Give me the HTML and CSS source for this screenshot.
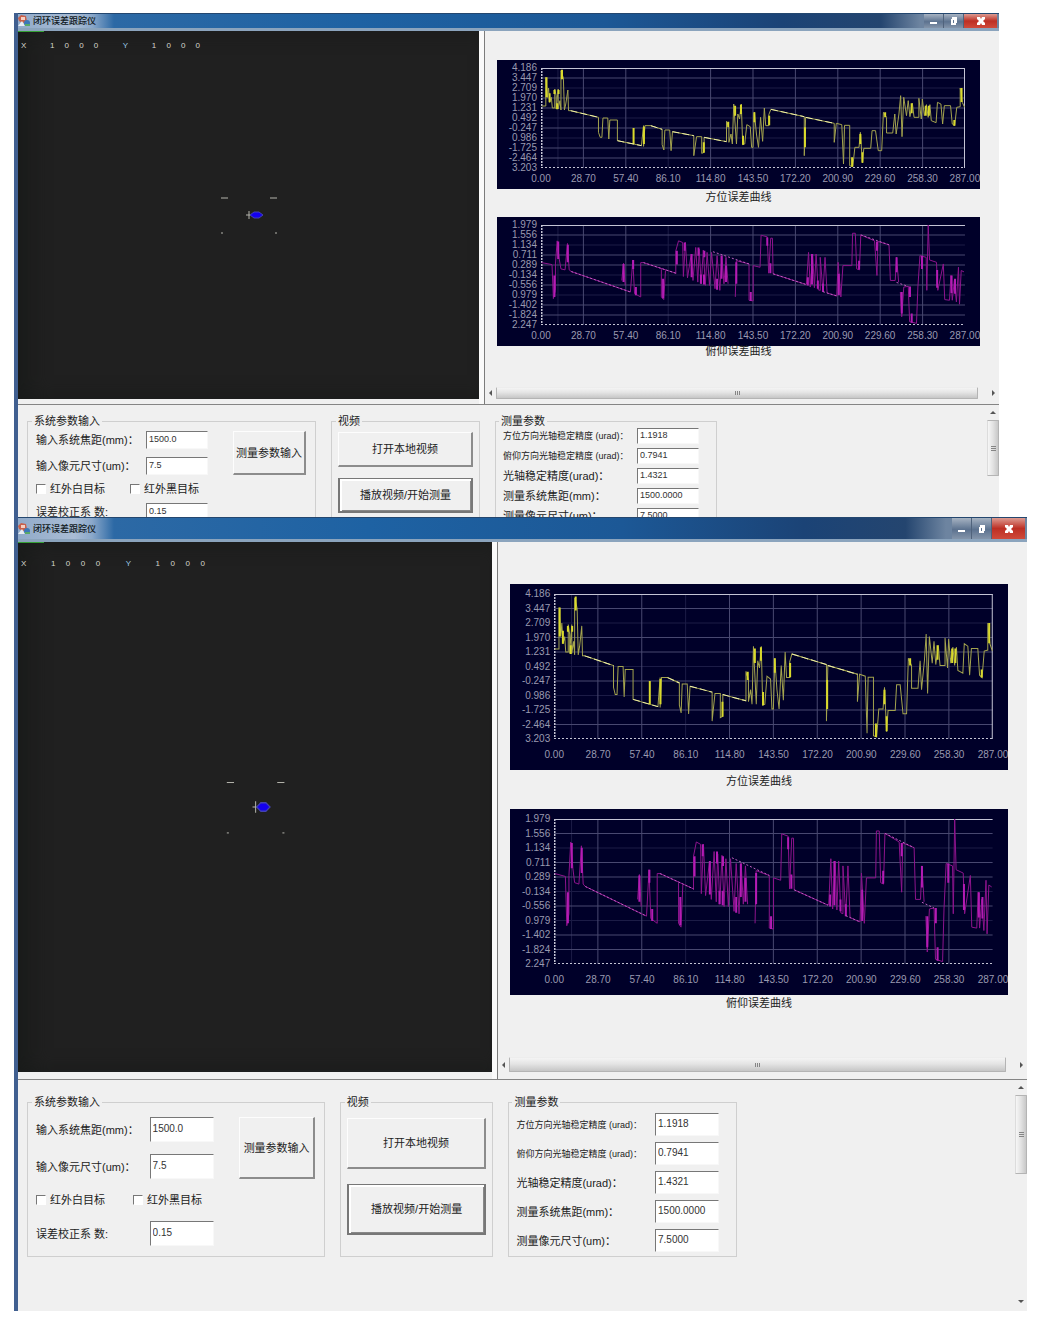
FILE: index.html
```
<!DOCTYPE html>
<html lang="zh-CN">
<head>
<meta charset="utf-8">
<title>闭环误差跟踪仪</title>
<link rel="stylesheet" href="styles.css">
</head>
<body>
<svg class="defs" aria-hidden="true">
  <symbol id="app-icon" viewBox="0 0 12 12">
    <path d="M0 3 3 0 8 1 9 6 5 8 1 6z" fill="#c9604a"/>
    <path d="M3 2h4v3H3z" fill="#f3cfc4"/>
    <path d="M0 11 4 6l3 5z" fill="#e8ecf2"/>
    <circle cx="9" cy="8" r="3" fill="#3c78b8"/>
    <path d="M7 9h5v2H7z" fill="#58a868"/>
  </symbol>
  <symbol id="reticle" viewBox="0 0 461 368" preserveAspectRatio="none">
    <path class="mark" d="M203 167h7M252 167h7M203 202h2M257 202h2"/>
    <path class="mark" d="M231 180v8M228 184h4"/>
    <path d="M232 184 236 181H241L245 184 241 187H236z" fill="#1400f0" stroke="#4444b0" stroke-width="1"/>
  </symbol>
  <symbol id="grid-lines" viewBox="0 0 100 100" preserveAspectRatio="none">
    <path class="grid-line grid-line--faint" d="M0 20H100M0 50H100M0 70H100M4 0V100M30 0V100"/>
    <path class="grid-line" d="M0 10H100M0 30H100M0 40H100M0 60H100M0 80H100M0 90H100"/>
    <path class="grid-line" d="M10 0V100M20 0V100M40 0V100M50 0V100M60 0V100M70 0V100M80 0V100M90 0V100"/>
    <path class="frame-line" d="M0 0H100"/>
    <path class="frame-line frame-line--ticks" d="M0 100H100"/>
    <path class="frame-line frame-line--axis" d="M0 0V100"/>
  </symbol>
  <symbol id="azimuth-curve" viewBox="178 202 1232 300" preserveAspectRatio="none">
    <path class="frame-line" d="M1410 202V502"/>
    <path class="curve curve--azimuth" d="M180 316H192V230L197 290 200 262 203 305 208 290 211 322H218V265L222 285V325L228 265V325L233 300 236 328V210L243 232 246 328 250 310 256 268 258 330H264L345 350V395L350 410H355L358 352H372L375 415 378 358H400V420L470 435V433L476 375V437L480 375H497L530 386V432L535 448 538 388H552L556 450 560 393 622 405V465L630 408H645V458L652 455V410L717 423V362L724 380V425L730 400 734 430 738 310 746 430 750 340 755 355 760 310 764 432 770 430 776 372 786 378 790 440H794L798 335 804 400 810 440 816 350 822 422 827 322 831 375H840V342L846 326 943 348V465L947 350 1030 368V425L1036 368 1052 372 1057 490 1060 374H1075V495L1084 498 1090 440H1102L1106 395 1112 487 1116 443H1136L1140 390H1150L1158 450H1168L1173 335 1182 350V397H1200L1206 340 1210 400 1218 340 1223 285 1227 408 1232 290 1240 345 1245 300 1250 348 1257 308 1262 350H1276V293L1283 355 1286 295 1292 345 1298 312 1303 350 1308 312 1312 360 1326 366 1330 305 1340 310 1345 370 1350 315H1368L1373 370 1380 375 1386 320 1396 318V262L1402 305 1409 320"/>
    <path class="curve curve--azimuth curve--dense" d="M194 230V290M203 278V305M217 268V280M229 268V280M225 308V326M239 207V236M447 382V430M477 378V430M651 425V456M722 363V380M742 315V345M759 312V340M765 405V432M798 335V365M841 345V374M945 380V440M1082 470V498M1106 400V430M1112 455V486M1178 335V350M1255 308V338M1296 315V345M1305 315V345M1379 358V375M1400 262V304"/>
    <path class="trend" d="M264 330 345 350M400 420 470 435M497 375 530 386M560 393 622 405M652 410 717 423M846 326 943 348M947 350 1030 368"/>
  </symbol>
  <symbol id="elevation-curve" viewBox="180 72 1233 303" preserveAspectRatio="none">
    <path class="curve curve--elevation" d="M182 186 212 192 216 295 222 270V190L227 120 233 175 238 205 250 208 257 128 262 208 268 213 440 275M415 240 420 188 425 255M440 275 447 178 452 280 470 290V186L478 186 572 218M530 206V290L537 298 542 210M572 220V150L580 120 592 125 594 228 600 125 606 232 617 160 622 240 630 140 636 245 640 145 646 250 652 148 658 255 663 155 670 255 676 155 686 265 692 165 700 270 706 165 712 250 718 170 724 250M745 290 748 180 785 190V300L797 302V195L817 200 820 103 838 108 842 218 848 112H853L855 220 950 252M952 252 958 155 963 260 970 160 975 262 980 160 986 268 992 270V170L1000 275 1006 170 1012 278 1040 287 1044 185 1052 290 1058 195 1084 195 1086 97 1094 97 1098 205 1106 208 1110 102 1150 120 1157 225 1160 122 1192 132 1196 240H1210L1214 170 1220 245M1225 275 1229 350 1235 260 1248 258 1252 365 1272 370 1276 260 1282 165 1300 170 1302 270 1306 72 1310 178 1330 185 1334 270 1350 190 1354 298 1368 300 1372 225 1376 300 1382 240 1388 305 1394 200 1397 312 1402 210 1410 214"/>
    <path class="curve curve--elevation curve--dense" d="M230 122V175M258 132V185M219 225V290M420 190V245M448 178V205M456 260V285M535 235V294M575 150V192M598 125V150M618 160V230M638 140V165M645 222V250M655 150V170M654 222V252M692 235V268M705 165V235M718 195V245M748 185V250M790 275V302M838 110V135M847 188V218M956 230V255M968 160V252M985 240V265M1000 250V275M1046 220V285M1105 180V207M1157 122V150M1214 170V215M1229 275V340M1253 258V290M1258 340V368M1288 165V205M1332 208V262M1374 225V278M1384 235V280"/>
    <path class="trend trend--soft" d="M268 213 440 275M478 186 572 218M855 220 950 252M1110 102 1192 132M680 153 785 190M1000 274 1040 287M1214 246 1248 258"/>
  </symbol>
</svg>

<main class="desktop">

<section class="window window--short">
  <header class="titlebar">
    <svg class="titlebar__icon"><use href="#app-icon"/></svg>
    <h1 class="titlebar__text">闭环误差跟踪仪</h1>
    <div class="titlebar__controls">
      <button class="sys" type="button" aria-label="最小化"><svg viewBox="0 0 12 10"><path d="M2 6h7v2H2z"/></svg></button>
      <button class="sys" type="button" aria-label="还原"><svg viewBox="0 0 12 10"><path fill-rule="evenodd" d="M4 1h5v6H8v2H3V3h1zM5 4v3h1V4z"/></svg></button>
      <button class="sys sys--close" type="button" aria-label="关闭"><svg viewBox="0 0 12 10"><path d="M2 1h3l1 2 1-2h3v2L8 5l2 2v2H7L6 7 5 9H2V7l2-2-2-2z"/></svg></button>
    </div>
  </header>
  <div class="upper">
    <div class="video">
      <p class="readout"><span>X</span><span></span><span>1</span><span>0</span><span>0</span><span>0</span><span></span><span class="readout__y">Y</span><span></span><span>1</span><span>0</span><span>0</span><span>0</span></p>
      <svg class="video__overlay"><use href="#reticle" width="100%" height="100%"/></svg>
    </div>
    <div class="splitter"></div>
    <div class="charts">
      <figure class="figure">
        <div class="chart">
          <ol class="axis axis--y"><li>4.186</li><li>3.447</li><li>2.709</li><li>1.970</li><li>1.231</li><li>0.492</li><li>-0.247</li><li>0.986</li><li>-1.725</li><li>-2.464</li><li>3.203</li></ol>
          <svg class="plot"><use href="#grid-lines" width="100%" height="100%"/><use href="#azimuth-curve" width="100%" height="100%"/></svg>
          <ol class="axis axis--x"><li>0.00</li><li>28.70</li><li>57.40</li><li>86.10</li><li>114.80</li><li>143.50</li><li>172.20</li><li>200.90</li><li>229.60</li><li>258.30</li><li>287.00</li></ol>
        </div>
        <figcaption class="caption">方位误差曲线</figcaption>
      </figure>
      <figure class="figure figure--last">
        <div class="chart">
          <ol class="axis axis--y"><li>1.979</li><li>1.556</li><li>1.134</li><li>0.711</li><li>0.289</li><li>-0.134</li><li>-0.556</li><li>0.979</li><li>-1.402</li><li>-1.824</li><li>2.247</li></ol>
          <svg class="plot"><use href="#grid-lines" width="100%" height="100%"/><use href="#elevation-curve" width="100%" height="100%"/></svg>
          <ol class="axis axis--x"><li>0.00</li><li>28.70</li><li>57.40</li><li>86.10</li><li>114.80</li><li>143.50</li><li>172.20</li><li>200.90</li><li>229.60</li><li>258.30</li><li>287.00</li></ol>
        </div>
        <figcaption class="caption">俯仰误差曲线</figcaption>
      </figure>
      <div class="hscroll"><i class="arrow arrow--left"></i><div class="hscroll__thumb"><i class="grip"></i></div><i class="arrow arrow--right"></i></div>
    </div>
  </div>
  <div class="lower">
    <form class="groups">
      <fieldset class="group">
        <legend>系统参数输入</legend>
        <div class="inputs">
          <label for="a-focal">输入系统焦距(mm)：</label><input id="a-focal" type="text" value="1500.0">
          <label for="a-pixel">输入像元尺寸(um)：</label><input id="a-pixel" type="text" value="7.5">
          <div class="checks">
            <label class="check"><input type="checkbox">红外白目标</label>
            <label class="check"><input type="checkbox">红外黑目标</label>
          </div>
          <label for="a-factor">误差校正系 数:</label><input id="a-factor" type="text" value="0.15">
          <button class="btn inputs__submit" type="button">测量参数输入</button>
        </div>
      </fieldset>
      <fieldset class="group">
        <legend>视频</legend>
        <div class="actions">
          <button class="btn" type="button">打开本地视频</button>
          <button class="btn btn--default" type="button">播放视频/开始测量</button>
        </div>
      </fieldset>
      <fieldset class="group group--results">
        <legend>测量参数</legend>
        <div class="results">
          <label class="dense" for="a-az">方位方向光轴稳定精度 (urad)：</label><input id="a-az" type="text" value="1.1918">
          <label class="dense" for="a-el">俯仰方向光轴稳定精度 (urad)：</label><input id="a-el" type="text" value="0.7941">
          <label for="a-ax">光轴稳定精度(urad)：</label><input id="a-ax" type="text" value="1.4321">
          <label for="a-mf">测量系统焦距(mm)：</label><input id="a-mf" type="text" value="1500.0000">
          <label for="a-mp">测量像元尺寸(um)：</label><input id="a-mp" type="text" value="7.5000">
        </div>
      </fieldset>
    </form>
    <div class="vscroll"><i class="arrow arrow--up"></i><div class="vscroll__thumb"><i class="grip grip--v"></i></div><i class="arrow arrow--down"></i></div>
  </div>
</section>

<section class="window window--tall">
  <header class="titlebar">
    <svg class="titlebar__icon"><use href="#app-icon"/></svg>
    <h1 class="titlebar__text">闭环误差跟踪仪</h1>
    <div class="titlebar__controls">
      <button class="sys" type="button" aria-label="最小化"><svg viewBox="0 0 12 10"><path d="M2 6h7v2H2z"/></svg></button>
      <button class="sys" type="button" aria-label="还原"><svg viewBox="0 0 12 10"><path fill-rule="evenodd" d="M4 1h5v6H8v2H3V3h1zM5 4v3h1V4z"/></svg></button>
      <button class="sys sys--close" type="button" aria-label="关闭"><svg viewBox="0 0 12 10"><path d="M2 1h3l1 2 1-2h3v2L8 5l2 2v2H7L6 7 5 9H2V7l2-2-2-2z"/></svg></button>
    </div>
  </header>
  <div class="upper">
    <div class="video">
      <p class="readout"><span>X</span><span></span><span>1</span><span>0</span><span>0</span><span>0</span><span></span><span class="readout__y">Y</span><span></span><span>1</span><span>0</span><span>0</span><span>0</span></p>
      <svg class="video__overlay"><use href="#reticle" width="100%" height="100%"/></svg>
    </div>
    <div class="splitter"></div>
    <div class="charts">
      <figure class="figure">
        <div class="chart">
          <ol class="axis axis--y"><li>4.186</li><li>3.447</li><li>2.709</li><li>1.970</li><li>1.231</li><li>0.492</li><li>-0.247</li><li>0.986</li><li>-1.725</li><li>-2.464</li><li>3.203</li></ol>
          <svg class="plot"><use href="#grid-lines" width="100%" height="100%"/><use href="#azimuth-curve" width="100%" height="100%"/></svg>
          <ol class="axis axis--x"><li>0.00</li><li>28.70</li><li>57.40</li><li>86.10</li><li>114.80</li><li>143.50</li><li>172.20</li><li>200.90</li><li>229.60</li><li>258.30</li><li>287.00</li></ol>
        </div>
        <figcaption class="caption">方位误差曲线</figcaption>
      </figure>
      <figure class="figure figure--last">
        <div class="chart">
          <ol class="axis axis--y"><li>1.979</li><li>1.556</li><li>1.134</li><li>0.711</li><li>0.289</li><li>-0.134</li><li>-0.556</li><li>0.979</li><li>-1.402</li><li>-1.824</li><li>2.247</li></ol>
          <svg class="plot"><use href="#grid-lines" width="100%" height="100%"/><use href="#elevation-curve" width="100%" height="100%"/></svg>
          <ol class="axis axis--x"><li>0.00</li><li>28.70</li><li>57.40</li><li>86.10</li><li>114.80</li><li>143.50</li><li>172.20</li><li>200.90</li><li>229.60</li><li>258.30</li><li>287.00</li></ol>
        </div>
        <figcaption class="caption">俯仰误差曲线</figcaption>
      </figure>
      <div class="hscroll"><i class="arrow arrow--left"></i><div class="hscroll__thumb"><i class="grip"></i></div><i class="arrow arrow--right"></i></div>
    </div>
  </div>
  <div class="lower">
    <form class="groups">
      <fieldset class="group">
        <legend>系统参数输入</legend>
        <div class="inputs">
          <label for="b-focal">输入系统焦距(mm)：</label><input id="b-focal" type="text" value="1500.0">
          <label for="b-pixel">输入像元尺寸(um)：</label><input id="b-pixel" type="text" value="7.5">
          <div class="checks">
            <label class="check"><input type="checkbox">红外白目标</label>
            <label class="check"><input type="checkbox">红外黑目标</label>
          </div>
          <label for="b-factor">误差校正系 数:</label><input id="b-factor" type="text" value="0.15">
          <button class="btn inputs__submit" type="button">测量参数输入</button>
        </div>
      </fieldset>
      <fieldset class="group">
        <legend>视频</legend>
        <div class="actions">
          <button class="btn" type="button">打开本地视频</button>
          <button class="btn btn--default" type="button">播放视频/开始测量</button>
        </div>
      </fieldset>
      <fieldset class="group group--results">
        <legend>测量参数</legend>
        <div class="results">
          <label class="dense" for="b-az">方位方向光轴稳定精度 (urad)：</label><input id="b-az" type="text" value="1.1918">
          <label class="dense" for="b-el">俯仰方向光轴稳定精度 (urad)：</label><input id="b-el" type="text" value="0.7941">
          <label for="b-ax">光轴稳定精度(urad)：</label><input id="b-ax" type="text" value="1.4321">
          <label for="b-mf">测量系统焦距(mm)：</label><input id="b-mf" type="text" value="1500.0000">
          <label for="b-mp">测量像元尺寸(um)：</label><input id="b-mp" type="text" value="7.5000">
        </div>
      </fieldset>
    </form>
    <div class="vscroll"><i class="arrow arrow--up"></i><div class="vscroll__thumb"><i class="grip grip--v"></i></div><i class="arrow arrow--down"></i></div>
  </div>
</section>

</main>
</body>
</html>
```
FILE: styles.css
```
* { box-sizing: border-box; }

body {
  margin: 0;
  background: #fff;
  color: #222;
  font: 11px/12px "Liberation Sans", "Noto Sans CJK SC", sans-serif;
}

.defs { display: none; }

.desktop { padding: 13px 17px 13px 14px; }

/* The two windows share one layout and differ in their vertical rhythm. */
.window {
  border-left: 4px solid #405f90;
  background: #f0f0f0;
  overflow: hidden;
}

.window--short {
  --title-h: 18px;
  --video-h: 368px;
  --video-gap: 5px;
  --readout-top: 9px;
  --chart-top: 29px;
  --chart-h: 129px;
  --plot-top: 8px;
  --plot-bottom: 21px;
  --caption-h: 28px;
  --caption-line: 16px;
  --caption-last: 11px;
  --hscroll-h: 12px;
  --legend-line: 12px;
  --panel-top: 10px;
  --field-h: 18px;
  --field-gap: 8px;
  --check-h: 12px;
  --inputs-top: 4px;
  --btn-h: 35px;
  --btn-gap: 11px;
  --result-h: 16px;
  --result-gap: 4px;
  --result-top: 1px;
  --thumb-h: 56px;
  --value-size: 9px;
  max-height: 504px;
  margin-right: 28px;
}

.window--tall {
  --title-h: 25px;
  --video-h: 530px;
  --video-gap: 7px;
  --readout-top: 16px;
  --chart-top: 42px;
  --chart-h: 186px;
  --plot-top: 10px;
  --plot-bottom: 31px;
  --caption-h: 39px;
  --caption-line: 22px;
  --caption-last: 16px;
  --hscroll-h: 15px;
  --legend-line: 14px;
  --panel-top: 15px;
  --field-h: 25px;
  --field-gap: 12px;
  --check-h: 18px;
  --inputs-top: 8px;
  --btn-h: 51px;
  --btn-gap: 15px;
  --result-h: 23px;
  --result-gap: 6px;
  --result-top: 4px;
  --thumb-h: 79px;
  --value-size: 10px;
}

.titlebar {
  display: flex;
  align-items: center;
  gap: 3px;
  height: var(--title-h);
  margin-left: -4px;
  padding: 0 2px 0 4px;
  border-top: 1px solid #24476f;
  border-bottom: 3px solid #8ba4bd;
  background: linear-gradient(90deg, #8fa9c9 0, #a9bcd4 60px, #8ba8ca 78px, #2c69a5 100px, #1e62a3 35%, #1c5896 60%, #1b4376 78%, #24456f 88%, #6d84a0 92%);
}
.titlebar__icon { width: 12px; height: 12px; }
.titlebar__text { margin: 0; font-size: 9px; line-height: 12px; font-weight: 500; color: #101820; }
.titlebar__controls { display: flex; align-self: stretch; margin-left: auto; }

.sys {
  display: grid;
  place-items: center;
  width: 20px;
  padding: 0;
  border: 0;
  border-right: 1px solid #50637c;
  background: linear-gradient(#a7b3c2, #5c728f 55%, #8495aa);
}
.sys svg { width: 12px; height: 10px; fill: #fff; }
.sys--close { width: 33px; border: 0; background: linear-gradient(#dd9a90, #bd2f24 50%, #cf4a3a); }

.upper {
  display: grid;
  grid-template-columns: 461fr 6px 514fr;
  border-bottom: 1px solid #858585;
}

.video {
  position: relative;
  min-height: var(--video-h);
  margin-bottom: var(--video-gap);
  padding: var(--readout-top) 0 0;
  background: #202020;
  box-shadow: inset 12px 0 20px #191b1a;
}
.video::before {
  content: "";
  position: absolute;
  top: 0;
  left: 0;
  width: 26px;
  height: 1px;
  background: #35a035;
}
.video__overlay { position: absolute; inset: 0; width: 100%; height: 100%; }
.mark { fill: none; stroke: #b4b4ac; stroke-width: 1; vector-effect: non-scaling-stroke; }

.readout {
  display: grid;
  grid-template-columns: repeat(13, 1fr);
  width: 41%;
  margin: 0;
  font-size: 8px;
  line-height: 12px;
  color: #d6d6cc;
}
.readout span { padding-left: 3px; }
.readout .readout__y { color: #9cc8e6; }

.splitter { background: #fafafa; border-right: 1px solid #7c7c7c; }

.charts { display: flex; flex-direction: column; padding-top: var(--chart-top); }
.figure { margin: 0 19px 0 12px; }

.chart {
  display: grid;
  grid-template-columns: 44px minmax(0, 1fr) 15px;
  grid-template-rows: minmax(0, 1fr) var(--plot-bottom);
  height: var(--chart-h);
  padding-top: var(--plot-top);
  background: #000029;
  overflow: hidden;
}
.plot { width: 100%; height: 100%; min-height: 0; overflow: visible; }

.axis {
  display: flex;
  justify-content: space-between;
  margin: 0;
  padding: 0;
  list-style: none;
  font-size: 10px;
  line-height: 0;
  color: #9a9ab0;
}
.axis li { display: flex; }
.axis--y { flex-direction: column; padding-right: 4px; }
.axis--y li { justify-content: flex-end; height: 0; }
.axis--x { grid-column: 2; align-items: center; }
.axis--x li { justify-content: center; width: 0; }

.grid-line { fill: none; stroke: #484870; stroke-width: 1; vector-effect: non-scaling-stroke; }
.grid-line--faint { stroke: #1c1c46; }
.frame-line { fill: none; stroke: #c4c4d4; stroke-width: 2; vector-effect: non-scaling-stroke; }
.frame-line--ticks { stroke-dasharray: 2 2; }
.frame-line--axis { stroke-width: 3; stroke-dasharray: 2 1; }
.curve { fill: none; stroke-width: 1; vector-effect: non-scaling-stroke; }
.curve--azimuth { stroke: #a3a34e; }
.curve--elevation { stroke: #8d148d; }
.curve--dense { stroke-width: 2; }
.curve--azimuth.curve--dense { stroke: #d9d92c; }
.curve--elevation.curve--dense { stroke: #b41cb4; }
.trend { fill: none; stroke: #f0f0a8; stroke-width: 1; stroke-dasharray: 7 3; vector-effect: non-scaling-stroke; }
.trend--soft { stroke: #c060c0; stroke-dasharray: 2 2; }

.caption {
  height: var(--caption-h);
  line-height: var(--caption-line);
  text-align: center;
}
.figure--last .caption { height: auto; line-height: var(--caption-last); }

.hscroll {
  display: flex;
  align-items: center;
  justify-content: space-between;
  height: var(--hscroll-h);
  margin-top: auto;
  margin-bottom: var(--video-gap);
  padding: 0 4px;
}
.hscroll__thumb {
  display: grid;
  place-items: center;
  flex: 1;
  align-self: stretch;
  margin: 0 14px 0 4px;
  border: 1px solid #b4b4b4;
  border-top-color: #ededed;
  border-radius: 1px;
  background: linear-gradient(#f4f4f4, #e4e4e4 45%, #c6c6c6);
}
.grip { width: 5px; height: 4px; background: repeating-linear-gradient(90deg, #858585 0 1px, transparent 1px 2px); }
.grip--v { width: 5px; height: 5px; background: repeating-linear-gradient(#858585 0 1px, transparent 1px 2px); }

.arrow { border: 3px solid transparent; }
.arrow--left { border-left-width: 0; border-right-color: #555; }
.arrow--right { border-right-width: 0; border-left-color: #555; }
.arrow--up { border-top-width: 0; border-bottom-color: #555; }
.arrow--down { border-bottom-width: 0; border-top-color: #555; }

.lower { display: grid; grid-template-columns: 1fr 12px; min-height: 231px; }

.groups {
  display: grid;
  grid-template-columns: 289fr 149fr 222fr 255fr;
  grid-template-rows: max-content;
  gap: 15px;
  padding: var(--panel-top) 0 0 9px;
}
.group {
  min-width: 0;
  margin: 0;
  padding: 0 9px 10px 8px;
  border: 1px solid #cfcfcf;
}
.group:nth-child(2) { padding: 0 6px 10px; }
.group--results { padding: 0 17px 4px 7px; }
.group legend {
  margin-left: -4px;
  padding: 0 2px;
  line-height: var(--legend-line);
}
.group:nth-child(2) legend { margin-left: -2px; }

.inputs {
  display: grid;
  grid-template-columns: 110fr 62fr 25fr 73fr;
  grid-template-rows: var(--field-h) var(--field-h) var(--check-h) var(--field-h);
  row-gap: var(--field-gap);
  align-items: center;
  padding-top: var(--inputs-top);
}
.inputs label, .results label { white-space: nowrap; }
.inputs > label { grid-column: 1; }
.inputs > input { grid-column: 2; }
.inputs__submit { grid-column: 4; grid-row: 1 / 3; }

.checks { grid-column: 1 / -1; display: grid; grid-template-columns: 94fr 176fr; }
.check { display: flex; align-items: center; gap: 4px; }
.check input {
  appearance: none;
  width: 10px;
  height: 10px;
  margin: 0;
  border: 1px solid #fff;
  border-top-color: #777;
  border-left-color: #777;
  background: #fff;
}

input[type="text"] {
  width: 100%;
  min-width: 0;
  height: 100%;
  padding: 0 2px 2px;
  border: 1px solid #f8f8f8;
  border-top: 1px solid #777;
  border-left: 1px solid #777;
  border-radius: 0;
  background: #fff;
  color: #333;
  font-family: inherit;
  font-size: var(--value-size);
}

.actions {
  display: grid;
  grid-template-rows: var(--btn-h) var(--btn-h);
  gap: var(--btn-gap);
  padding-top: calc(var(--inputs-top) + 1px);
}
.btn {
  align-self: stretch;
  padding: 0;
  border: 1px solid #fdfdfd;
  border-right: 2px solid #8c8c8c;
  border-bottom: 2px solid #8c8c8c;
  border-radius: 0;
  background: #f0f0f0;
  color: #222;
  font: inherit;
  white-space: nowrap;
}
.btn--default { border: 2px solid #777; border-top: 1px solid #777; box-shadow: inset 2px 2px #fff, inset -1px -1px #888; }

.results {
  display: grid;
  grid-template-columns: 134fr 62fr;
  grid-auto-rows: var(--result-h);
  row-gap: var(--result-gap);
  align-items: center;
  padding-top: var(--result-top);
}
.results .dense { font-size: 9px; }

.vscroll {
  display: flex;
  flex-direction: column;
  align-items: center;
  gap: 6px;
  padding: 6px 0 8px;
}
.vscroll .arrow--down { margin-top: auto; }
.vscroll__thumb {
  display: grid;
  place-items: center;
  width: 12px;
  height: var(--thumb-h);
  border: 1px solid #b4b4b4;
  border-left-color: #dcdcdc;
  border-radius: 1px;
  background: linear-gradient(90deg, #f6f6f6, #e2e2e2 50%, #c8c8c8);
}
```
